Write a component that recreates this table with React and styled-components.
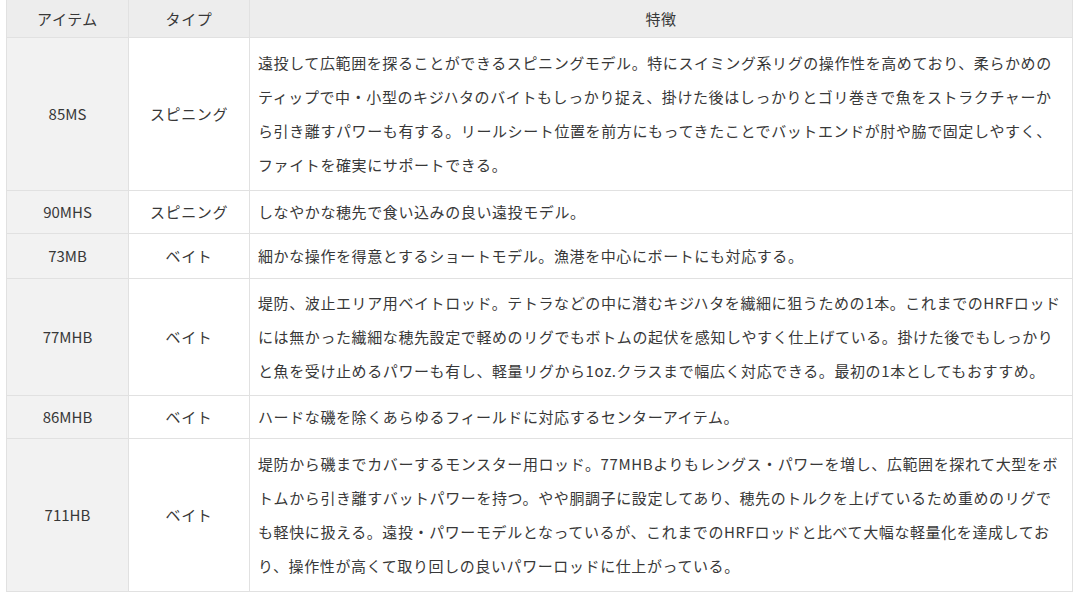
import React from 'react'
import styled, { createGlobalStyle } from 'styled-components'

const GlobalStyle = createGlobalStyle`
    html, body {
        margin: 0;
        padding: 0;
        background: #ffffff;
    }
    body {
        font-family: "Noto Sans CJK JP", "Noto Sans", sans-serif;
        color: #383838;
    }
`

// pad = vertical padding of the row's cells, tuned to the reference row heights
const rows = [
    {
        name: '85MS',
        type: 'スピニング',
        pad: 8,
        lines: [
            '遠投して広範囲を探ることができるスピニングモデル。特にスイミング系リグの操作性を高めており、柔らかめの',
            'ティップで中・小型のキジハタのバイトもしっかり捉え、掛けた後はしっかりとゴリ巻きで魚をストラクチャーか',
            'ら引き離すパワーも有する。リールシート位置を前方にもってきたことでバットエンドが肘や脇で固定しやすく、',
            'ファイトを確実にサポートできる。',
        ],
    },
    {
        name: '90MHS',
        type: 'スピニング',
        pad: 4,
        lines: ['しなやかな穂先で食い込みの良い遠投モデル。'],
    },
    {
        name: '73MB',
        type: 'ベイト',
        pad: 5,
        lines: ['細かな操作を得意とするショートモデル。漁港を中心にボートにも対応する。'],
    },
    {
        name: '77MHB',
        type: 'ベイト',
        pad: 7,
        lines: [
            '堤防、波止エリア用ベイトロッド。テトラなどの中に潜むキジハタを繊細に狙うための1本。これまでのHRFロッド',
            'には無かった繊細な穂先設定で軽めのリグでもボトムの起伏を感知しやすく仕上げている。掛けた後でもしっかり',
            'と魚を受け止めるパワーも有し、軽量リグから1oz.クラスまで幅広く対応できる。最初の1本としてもおすすめ。',
        ],
    },
    {
        name: '86MHB',
        type: 'ベイト',
        pad: 4,
        lines: ['ハードな磯を除くあらゆるフィールドに対応するセンターアイテム。'],
    },
    {
        name: '711HB',
        type: 'ベイト',
        pad: 8,
        lines: [
            '堤防から磯までカバーするモンスター用ロッド。77MHBよりもレングス・パワーを増し、広範囲を探れて大型をボ',
            'トムから引き離すバットパワーを持つ。やや胴調子に設定してあり、穂先のトルクを上げているため重めのリグで',
            'も軽快に扱える。遠投・パワーモデルとなっているが、これまでのHRFロッドと比べて大幅な軽量化を達成してお',
            'り、操作性が高くて取り回しの良いパワーロッドに仕上がっている。',
        ],
    },
]

const App = () => {
    return (
        <S.Page>
            <GlobalStyle />
            <S.Table>
                <colgroup>
                    <col style={{ width: 122 }} />
                    <col style={{ width: 121 }} />
                    <col />
                </colgroup>
                <thead>
                    <tr>
                        <S.HeadCell>アイテム</S.HeadCell>
                        <S.HeadCell>タイプ</S.HeadCell>
                        <S.HeadCell>特徴</S.HeadCell>
                    </tr>
                </thead>
                <tbody>
                    {rows.map((row) => (
                        <tr key={row.name}>
                            <S.NameCell $pad={row.pad}>{row.name}</S.NameCell>
                            <S.TypeCell $pad={row.pad}>{row.type}</S.TypeCell>
                            <S.DescCell $pad={row.pad}>
                                {row.lines.map((line) => (
                                    <S.Line key={line}>{line}</S.Line>
                                ))}
                            </S.DescCell>
                        </tr>
                    ))}
                </tbody>
            </S.Table>
        </S.Page>
    )
}

const cell = `
    border: 1px solid #e1e1e1;
    font-size: 15px;
    line-height: 34px;
    letter-spacing: 0.6px;
    color: #383838;
    vertical-align: middle;
`

const S = {
    Page: styled.div`
        width: 1080px;
        height: 601px;
        padding: 0 0 0 6px;
        box-sizing: border-box;
        overflow: hidden;
    `,
    Table: styled.table`
        width: 1067px;
        border-collapse: collapse;
        table-layout: fixed;
        margin-top: -1px;
    `,
    HeadCell: styled.th`
        ${cell}
        height: 37px;
        padding: 0;
        font-weight: 400;
        text-align: center;
        background-color: #ededed;
    `,
    NameCell: styled.td`
        ${cell}
        padding: ${({ $pad }) => `${$pad}px 0`};
        text-align: center;
        letter-spacing: 0;
        background-color: #f2f2f2;
    `,
    TypeCell: styled.td`
        ${cell}
        padding: ${({ $pad }) => `${$pad}px 0`};
        text-align: center;
        background-color: #ffffff;
    `,
    DescCell: styled.td`
        ${cell}
        padding: ${({ $pad }) => `${$pad}px 8px`};
        text-align: left;
        background-color: #ffffff;
    `,
    Line: styled.div`
        white-space: nowrap;
    `,
}

export default App
